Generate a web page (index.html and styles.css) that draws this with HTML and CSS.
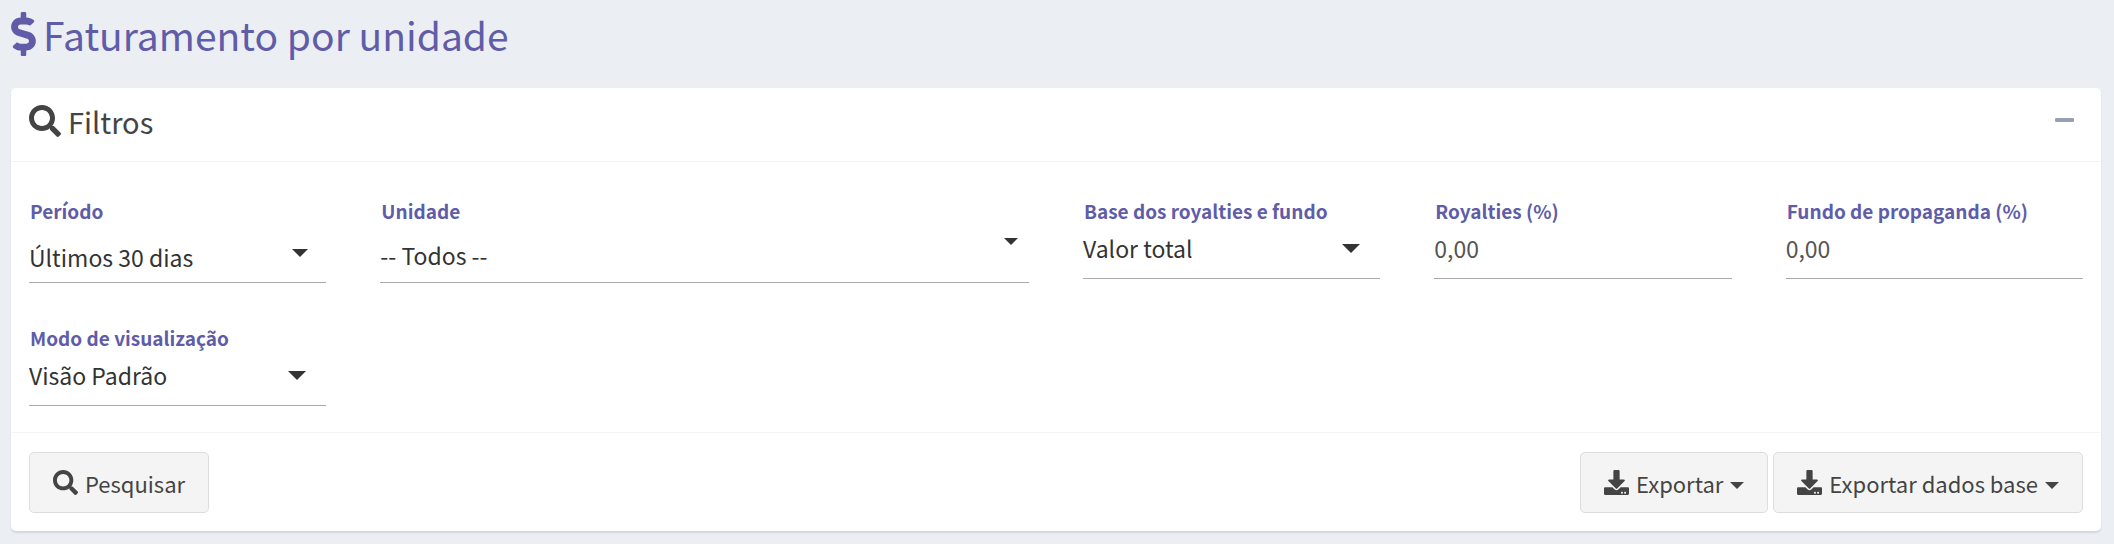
FILE: index.html
```html
<!DOCTYPE html>
<html lang="pt-BR">
<head>
    <meta charset="UTF-8">
    <meta name="viewport" content="width=device-width, initial-scale=1.0">
    <title>Faturamento por unidade</title>
    <link rel="stylesheet" href="styles.css">
</head>
<body>
    <svg class="sprite" aria-hidden="true">
        <symbol id="icon-search" viewBox="0 0 512 512">
            <path d="M505 442.700L405.300 343c-4.500-4.500-10.600-7-17-7H372c27.600-35.300 44-79.700 44-128C416 93.100 322.900 0 208 0S0 93.100 0 208s93.100 208 208 208c48.300 0 92.700-16.400 128-44v16.300c0 6.400 2.500 12.500 7 17l99.700 99.700c9.400 9.400 24.600 9.400 33.900 0l28.300-28.300c9.400-9.400 9.400-24.600.1-34zM208 336c-70.700 0-128-57.200-128-128 0-70.700 57.200-128 128-128 70.700 0 128 57.200 128 128 0 70.700-57.200 128-128 128z"/>
        </symbol>
        <symbol id="icon-download" viewBox="0 0 512 512">
            <path d="M216 0h80c13.300 0 24 10.700 24 24v168h87.700c17.800 0 26.700 21.500 14.100 34.100L269.700 378.300c-7.500 7.500-19.800 7.500-27.300 0L90.100 226.100c-12.600-12.600-3.700-34.100 14.100-34.100H192V24c0-13.300 10.700-24 24-24zm296 376v112c0 13.300-10.700 24-24 24H24c-13.300 0-24-10.700-24-24V376c0-13.300 10.700-24 24-24h146.700l49 49c20.100 20.100 52.500 20.100 72.600 0l49-49H488c13.300 0 24 10.700 24 24zm-124 88c0-11-9-20-20-20s-20 9-20 20 9 20 20 20 20-9 20-20zm64 0c0-11-9-20-20-20s-20 9-20 20 9 20 20 20 20-9 20-20z"/>
        </symbol>
    </svg>

    <h1 class="page-title">
        <svg class="icon-dollar" viewBox="0 0 288 512" aria-hidden="true">
            <path d="M209.200 233.400l-108-31.600C88.700 198.200 80 186.500 80 173.500c0-16.300 13.200-29.500 29.500-29.500h66.300c12.200 0 24.200 3.700 34.200 10.500 6.100 4.100 14.300 3.100 19.500-2l34.800-34c7.100-6.900 6.100-18.400-1.800-24.500C238 74.800 207.400 64.100 176 64V16c0-8.800-7.200-16-16-16h-32c-8.800 0-16 7.200-16 16v48h-2.500C45.800 64-5.400 118.700.5 183.600c4.200 46.100 39.400 83.600 83.800 96.600l102.500 30c12.500 3.700 21.200 15.300 21.200 28.300 0 16.300-13.200 29.500-29.500 29.500h-66.300C100 368 88 364.300 78 357.500c-6.100-4.100-14.300-3.100-19.500 2l-34.800 34c-7.100 6.900-6.100 18.400 1.800 24.500 24.500 19.200 55.100 29.900 86.500 30v48c0 8.800 7.200 16 16 16h32c8.800 0 16-7.200 16-16v-48.200c46.600-.9 90.300-28.600 105.700-72.700 21.500-61.600-14.600-124.800-72.500-141.700z"/>
        </svg>
        Faturamento por unidade
    </h1>

    <form class="box">
        <div class="box-header">
            <h2 class="box-title">
                <svg class="icon" aria-hidden="true"><use href="#icon-search"/></svg>
                Filtros
            </h2>
            <button type="button" class="btn-collapse" aria-label="Recolher"></button>
        </div>

        <div class="box-body">
            <div class="field">
                <label for="periodo">Período</label>
                <div class="select select-periodo">
                    <select id="periodo">
                        <option>Últimos 30 dias</option>
                    </select>
                </div>
            </div>
            <div class="field field-wide">
                <label for="unidade">Unidade</label>
                <div class="select select-unidade">
                    <select id="unidade">
                        <option>-- Todos --</option>
                    </select>
                </div>
            </div>
            <div class="field">
                <label for="base">Base dos royalties e fundo</label>
                <div class="select">
                    <select id="base">
                        <option>Valor total</option>
                    </select>
                </div>
            </div>
            <div class="field">
                <label for="royalties">Royalties (%)</label>
                <input type="text" id="royalties" value="0,00">
            </div>
            <div class="field">
                <label for="fundo">Fundo de propaganda (%)</label>
                <input type="text" id="fundo" value="0,00">
            </div>
            <div class="field">
                <label for="modo">Modo de visualização</label>
                <div class="select">
                    <select id="modo">
                        <option>Visão Padrão</option>
                    </select>
                </div>
            </div>
        </div>

        <div class="box-footer">
            <button type="button" class="btn">
                <svg class="icon" aria-hidden="true"><use href="#icon-search"/></svg>
                Pesquisar
            </button>
            <div class="btn-group">
                <button type="button" class="btn">
                    <svg class="icon" aria-hidden="true"><use href="#icon-download"/></svg>
                    Exportar
                    <span class="caret"></span>
                </button>
                <button type="button" class="btn">
                    <svg class="icon" aria-hidden="true"><use href="#icon-download"/></svg>
                    Exportar dados base
                    <span class="caret"></span>
                </button>
            </div>
        </div>
    </form>
</body>
</html>
```

FILE: styles.css
```css
* {
    box-sizing: border-box;
}
body {
    margin: 0;
    padding: 10px 13px 13px 11px;
    background-color: #ebeff4;
    color: #444;
    font-family: "Noto Sans CJK JP", "Noto Sans", sans-serif;
    font-size: 23px;
}
svg {
    fill: currentColor;
    flex: none;
}
.sprite {
    display: none;
}
.page-title {
    display: flex;
    align-items: center;
    gap: 7px;
    margin: 0 0 30px;
    color: #605ca8;
    font-size: 39px;
    font-weight: 400;
    line-height: 48px;
}
.icon-dollar {
    width: 25px;
    height: 44px;
}
.box {
    background-color: #fff;
    border-radius: 5px;
    box-shadow: 0 2px 2px rgba(0, 0, 0, 0.1);
}
.box-header {
    display: flex;
    justify-content: space-between;
    align-items: flex-start;
    padding: 15px 18px 22px;
    border-bottom: 1px solid #f4f4f4;
}
.box-title {
    display: flex;
    align-items: center;
    gap: 7px;
    margin: 0;
    font-size: 29px;
    font-weight: 400;
    line-height: 36px;
}
.box-title .icon {
    width: 32px;
    height: 32px;
}
.btn-collapse {
    width: 37px;
    height: 34px;
    padding: 0 9px;
    border: none;
    background: none;
    cursor: pointer;
}
.btn-collapse::before {
    content: "";
    display: block;
    height: 4px;
    border-radius: 1px;
    background-color: #97a0b3;
}
.box-body {
    display: grid;
    grid-template-columns: repeat(12, 1fr);
    column-gap: 54px;
    row-gap: 43px;
    padding: 37px 18px 26px;
}
.field {
    grid-column: span 2;
    min-width: 0;
}
.field-wide {
    grid-column: span 4;
}
label {
    display: block;
    padding-left: 1px;
    color: #605ca8;
    font-size: 19px;
    font-weight: bold;
    line-height: 24px;
}
input,
select {
    display: block;
    width: 100%;
    height: 56px;
    margin: 0;
    padding: 0 0 6px;
    border: none;
    border-bottom: 1px solid #aaa;
    border-radius: 0;
    background: none;
    color: #555;
    font: inherit;
    outline: none;
}
select {
    appearance: none;
    color: #333;
}
.select {
    position: relative;
}
.select::after {
    content: "";
    position: absolute;
    top: 21px;
    right: 20px;
    border: 9px solid transparent;
    border-top-color: #333;
    border-bottom: none;
    pointer-events: none;
}
.select-periodo select {
    height: 60px;
    padding: 9px 0 0;
}
.select-periodo::after {
    top: 26px;
    right: 18px;
    border-width: 8px;
    border-bottom: none;
}
.select-unidade select {
    height: 60px;
    padding: 5px 0 1px;
}
.select-unidade::after {
    top: 15px;
    right: 11px;
    border-width: 7px;
    border-bottom: none;
}
.box-footer {
    display: flex;
    justify-content: space-between;
    padding: 19px 18px 18px;
    border-top: 1px solid #f4f4f4;
}
.btn-group {
    display: flex;
    gap: 5px;
}
.btn {
    display: flex;
    align-items: center;
    gap: 7px;
    height: 61px;
    padding: 0 23px;
    border: 1px solid #ddd;
    border-radius: 5px;
    background-color: #f4f4f4;
    color: #444;
    font: inherit;
    font-size: 22px;
    cursor: pointer;
}
.btn:hover {
    background-color: #e7e7e7;
}
.btn .icon {
    width: 25px;
    height: 25px;
}
.caret {
    margin-top: 5px;
    border: 7px solid transparent;
    border-top-color: #444;
    border-bottom: none;
}
```
